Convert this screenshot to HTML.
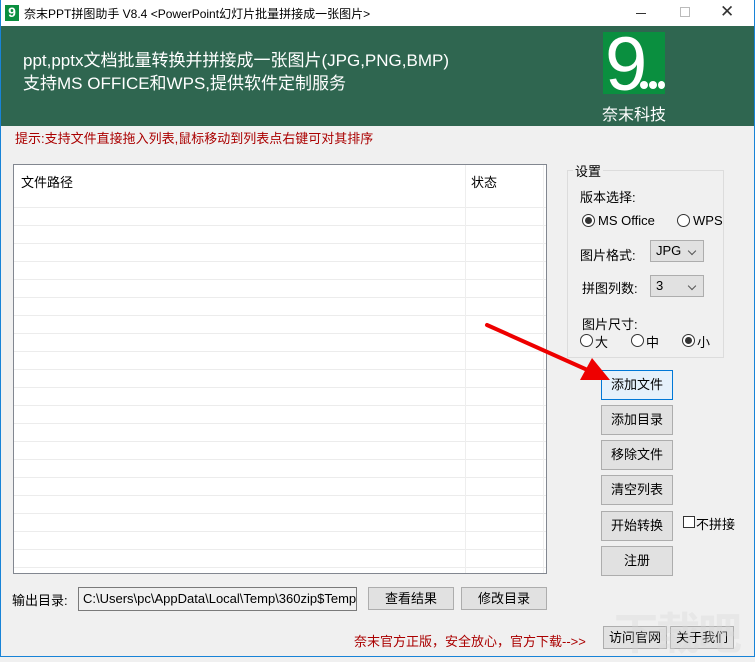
<!DOCTYPE html>
<html><head><meta charset="utf-8"><style>
*{box-sizing:border-box;margin:0;padding:0}
body{width:755px;height:657px;background:#f0f0f0;font-family:"Liberation Sans","Noto Sans CJK SC",sans-serif;font-size:12px;color:#000;position:relative;overflow:hidden}
.a{position:absolute}
.btn{position:absolute;background:#e1e1e1;border:1px solid #adadad;text-align:center;font-size:13px}
.rad{position:absolute;width:13px;height:13px;border:1px solid #333;border-radius:50%;background:#fff}
.rad.on::after{content:"";position:absolute;left:2px;top:2px;width:7px;height:7px;border-radius:50%;background:#333}
.sel{position:absolute;background:#e1e1e1;border:1px solid #adadad;font-size:13px;padding-left:5px}
.sel::after{content:"";position:absolute;right:8px;top:7px;width:5px;height:5px;border-right:1px solid #555;border-bottom:1px solid #555;transform:rotate(45deg)}
</style></head><body>
<div class="a" style="left:0;top:0;width:755px;height:657px;border:1px solid #1883d7;border-top:none"></div>
<div class="a" style="left:1px;top:0;width:753px;height:26px;background:#fff"></div>
<div class="a" style="left:5px;top:5px;width:14px;height:16px;background:#0a8f3f;color:#fff;font-size:14px;font-weight:bold;line-height:14px;text-align:center">9</div>
<div class="a" style="left:24px;top:5px;font-size:12px">奈末PPT拼图助手 V8.4 &lt;PowerPoint幻灯片批量拼接成一张图片&gt;</div>
<div class="a" style="left:636px;top:13px;width:10px;height:1px;background:#333"></div>
<div class="a" style="left:680px;top:7px;width:10px;height:10px;border:1px solid #bbb"></div>
<div class="a" style="left:720px;top:2px;font-size:17px;color:#333">✕</div>
<div class="a" style="left:1px;top:26px;width:753px;height:100px;background:#2f6650"></div>
<div class="a" style="left:23px;top:46px;color:#fff;font-size:17px">ppt,pptx文档批量转换并拼接成一张图片(JPG,PNG,BMP)</div>
<div class="a" style="left:23px;top:69px;color:#fff;font-size:17px">支持MS OFFICE和WPS,提供软件定制服务</div>
<div class="a" style="left:603px;top:32px;width:62px;height:62px;background:#0a8f3f;overflow:hidden">
<div class="a" style="left:2px;top:-5px;color:#fff;font-size:76px;line-height:76px;font-family:'Liberation Sans',sans-serif">9</div>
<div class="a" style="left:37px;top:49px;width:8px;height:8px;border-radius:50%;background:#fff"></div>
<div class="a" style="left:46px;top:49px;width:8px;height:8px;border-radius:50%;background:#fff"></div>
<div class="a" style="left:55px;top:49px;width:7px;height:8px;border-radius:50%;background:#fff"></div>
</div>
<div class="a" style="left:602px;top:101px;color:#fff;font-size:16px">奈末科技</div>
<div class="a" style="left:15px;top:128px;color:#a00;font-size:13px">提示:支持文件直接拖入列表,鼠标移动到列表点右键可对其排序</div>
<div class="a" style="left:13px;top:164px;width:534px;height:410px;background:#fff;border:1px solid #828790;overflow:hidden">
<div class="a" style="left:0;top:25px;width:100%;height:400px;background:repeating-linear-gradient(to bottom,transparent 0 17px,#ececec 17px 18px)"></div>
<div class="a" style="left:0;top:0;width:100%;height:42px;background:#fff"></div>
<div class="a" style="left:451px;top:0;width:1px;height:410px;background:#eee"></div>
<div class="a" style="left:529px;top:0;width:1px;height:410px;background:#eee"></div>
<div class="a" style="left:7px;top:7px;font-size:13px">文件路径</div>
<div class="a" style="left:457px;top:7px;font-size:13px">状态</div>
</div>
<div class="a" style="left:567px;top:170px;width:157px;height:188px;border:1px solid #dcdcdc"></div>
<div class="a" style="left:573px;top:161px;background:#f0f0f0;padding:0 2px;font-size:13px">设置</div>
<div class="a" style="left:580px;top:187px;font-size:13px">版本选择:</div>
<div class="rad on" style="left:582px;top:214px"></div><div class="a" style="left:598px;top:213px;font-size:13px">MS Office</div>
<div class="rad" style="left:677px;top:214px"></div><div class="a" style="left:693px;top:213px;font-size:13px">WPS</div>
<div class="a" style="left:580px;top:245px;font-size:13px">图片格式:</div>
<div class="sel" style="left:650px;top:240px;width:54px;height:22px;line-height:20px">JPG</div>
<div class="a" style="left:582px;top:278px;font-size:13px">拼图列数:</div>
<div class="sel" style="left:650px;top:275px;width:54px;height:22px;line-height:20px">3</div>
<div class="a" style="left:582px;top:314px;font-size:13px">图片尺寸:</div>
<div class="rad" style="left:580px;top:334px"></div><div class="a" style="left:595px;top:332px;font-size:13px">大</div>
<div class="rad" style="left:631px;top:334px"></div><div class="a" style="left:646px;top:332px;font-size:13px">中</div>
<div class="rad on" style="left:682px;top:334px"></div><div class="a" style="left:697px;top:332px;font-size:13px">小</div>
<div class="btn" style="left:601px;top:370px;width:72px;height:30px;line-height:28px;background:#e5f1fb;border-color:#0078d7">添加文件</div>
<div class="btn" style="left:601px;top:405px;width:72px;height:30px;line-height:28px">添加目录</div>
<div class="btn" style="left:601px;top:440px;width:72px;height:30px;line-height:28px">移除文件</div>
<div class="btn" style="left:601px;top:475px;width:72px;height:30px;line-height:28px">清空列表</div>
<div class="btn" style="left:601px;top:511px;width:72px;height:30px;line-height:28px">开始转换</div>
<div class="a" style="left:683px;top:516px;width:12px;height:12px;border:1px solid #333;background:#fff"></div>
<div class="a" style="left:696px;top:514px;font-size:13px">不拼接</div>
<div class="btn" style="left:601px;top:546px;width:72px;height:30px;line-height:28px">注册</div>
<div class="a" style="left:12px;top:590px;font-size:13px">输出目录:</div>
<div class="a" style="left:78px;top:587px;width:279px;height:24px;border:1px solid #7a7a7a;background:#f0f0f0;padding:3px 0 0 4px;font-size:13px;white-space:nowrap;overflow:hidden">C:\Users\pc\AppData\Local\Temp\360zip$Temp\360</div>
<div class="btn" style="left:368px;top:587px;width:86px;height:23px;line-height:21px">查看结果</div>
<div class="btn" style="left:461px;top:587px;width:86px;height:23px;line-height:21px">修改目录</div>
<div class="a" style="left:354px;top:631px;color:#a00;font-size:13px">奈末官方正版，安全放心，官方下载--&gt;&gt;</div>
<div class="btn" style="left:603px;top:626px;width:64px;height:23px;line-height:21px">访问官网</div>
<div class="btn" style="left:670px;top:626px;width:64px;height:23px;line-height:21px">关于我们</div>
<div class="a" style="left:614px;top:598px;font-size:44px;color:rgba(215,215,215,.35);font-weight:bold;letter-spacing:-2px">下载吧</div>
<svg class="a" style="left:0;top:0" width="755" height="657"><line x1="487" y1="325" x2="592" y2="372" stroke="#e00" stroke-width="4" stroke-linecap="round"/><polygon points="610,380 580,380 592,358" fill="#e00"/></svg>
</body></html>
